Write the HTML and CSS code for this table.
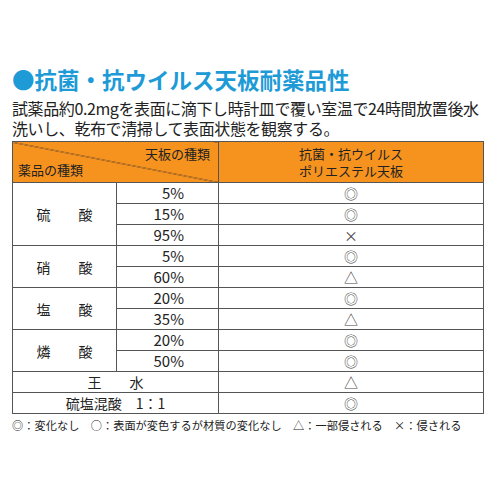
FILE: index.html
```html
<!DOCTYPE html>
<html lang="ja">
<head>
    <meta charset="UTF-8">
    <meta name="viewport" content="width=device-width, initial-scale=1.0">
    <title>抗菌・抗ウイルス天板耐薬品性</title>
    <link rel="stylesheet" href="styles.css">
</head>
<body>
    <div class="sheet">
        <!-- 見出し -->
        <h1 class="title">●抗菌・抗ウイルス天板耐薬品性</h1>
        <p class="lead">試薬品約0.2mgを表面に滴下し時計皿で覆い室温で24時間放置後水<br>洗いし、乾布で清掃して表面状態を観察する。</p>

        <!-- 試験結果の表 -->
        <table class="chart">
            <colgroup>
                <col class="c-name">
                <col class="c-conc">
                <col class="c-result">
            </colgroup>
            <thead>
                <tr>
                    <th colspan="2" class="corner">
                        <div class="corner-box">
                            <span class="corner-top">天板の種類</span>
                            <span class="corner-bottom">薬品の種類</span>
                        </div>
                    </th>
                    <th class="board">抗菌・抗ウイルス<br>ポリエステル天板</th>
                </tr>
            </thead>
            <tbody>
                <tr><td rowspan="3" class="name">硫　　酸</td><td class="conc">5%</td><td class="mark">◎</td></tr>
                <tr><td class="conc">15%</td><td class="mark">◎</td></tr>
                <tr><td class="conc">95%</td><td class="mark">×</td></tr>
                <tr><td rowspan="2" class="name">硝　　酸</td><td class="conc">5%</td><td class="mark">◎</td></tr>
                <tr><td class="conc">60%</td><td class="mark">△</td></tr>
                <tr><td rowspan="2" class="name">塩　　酸</td><td class="conc">20%</td><td class="mark">◎</td></tr>
                <tr><td class="conc">35%</td><td class="mark">△</td></tr>
                <tr><td rowspan="2" class="name">燐　　酸</td><td class="conc">20%</td><td class="mark">◎</td></tr>
                <tr><td class="conc">50%</td><td class="mark">◎</td></tr>
                <tr><td colspan="2" class="name">王　　水</td><td class="mark">△</td></tr>
                <tr><td colspan="2" class="name">硫塩混酸　1：1</td><td class="mark">◎</td></tr>
            </tbody>
        </table>

        <!-- 記号の説明 -->
        <p class="legend">◎：変化なし　○：表面が変色するが材質の変化なし　△：一部侵される　×：侵される</p>
    </div>
</body>
</html>
```

FILE: styles.css
```css
body {
    margin: 0;
    background-color: #ffffff;
    color: #222222;
    font-family: "Noto Sans CJK JP", "Noto Sans", sans-serif;
}
.sheet {
    padding: 64px 17px 0 12px;
}
.title {
    margin: 0;
    font-size: 22.5px;
    line-height: 30px;
    font-weight: 700;
    color: #1e9bd7;
    white-space: nowrap;
}
.lead {
    margin: 4px 0 0;
    font-size: 16px;
    line-height: 20px;
    letter-spacing: -0.4px;
    white-space: nowrap;
}
.chart {
    margin-top: 3px;
    width: 471px;
    table-layout: fixed;
    border-collapse: collapse;
    border: 1px solid #555555;
}
.c-name { width: 104px; }
.c-conc { width: 102px; }
.c-result { width: 265px; }
.chart th {
    background-color: #f6921e;
    border: 1px solid #555555;
    font-size: 13px;
    font-weight: 400;
    color: #222222;
    padding: 0;
    height: 40px;
}
.corner {
    background-image: linear-gradient(to top right, transparent calc(50% - 0.6px), #4a3a2a 50%, transparent calc(50% + 0.6px));
}
.corner-box {
    height: 40px;
    display: flex;
    flex-direction: column;
    justify-content: space-between;
    line-height: 16px;
    padding: 4px 0 4px;
    box-sizing: border-box;
}
.corner-top {
    text-align: right;
    padding-right: 8px;
}
.corner-bottom {
    text-align: left;
    padding-left: 5px;
}
.board {
    line-height: 17px;
}
.chart td {
    border: 1px solid #555555;
    height: 21px;
    padding: 0;
    box-sizing: border-box;
    line-height: 20px;
}
.name {
    text-align: center;
    font-size: 14px;
}
.conc {
    text-align: right;
    padding-right: 34px !important;
    font-size: 15px;
}
.mark {
    text-align: center;
    font-size: 14px;
    color: #4a4a4a;
}
.legend {
    margin: 4px 0 0;
    font-size: 11.2px;
    line-height: 14px;
    letter-spacing: 0.05px;
    white-space: nowrap;
}
```
